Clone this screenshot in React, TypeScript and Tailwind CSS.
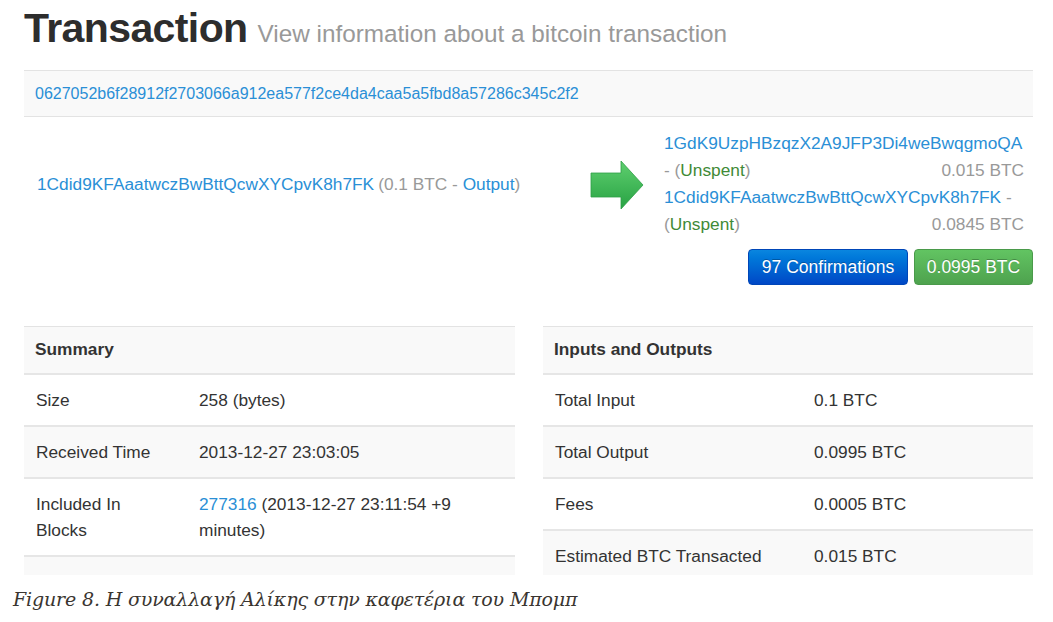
import { ReactElement } from "react";

const summary = [
  { label: "Size", value: <>258 (bytes)</> },
  { label: "Received Time", value: <>2013-12-27 23:03:05</> },
  {
    label: "Included In Blocks",
    value: (
      <>
        <div className="whitespace-nowrap">
          <span className="text-[#2a8fd6]">277316</span>
          <span> (2013-12-27 23:11:54 +9</span>
        </div>
        <div>minutes)</div>
      </>
    ),
  },
  { label: "", value: <>&nbsp;</> },
];

const totals = [
  { label: "Total Input", value: "0.1 BTC" },
  { label: "Total Output", value: "0.0995 BTC" },
  { label: "Fees", value: "0.0005 BTC" },
  { label: "Estimated BTC Transacted", value: "0.015 BTC" },
];

function Arrow(): ReactElement {
  return (
    <svg width="54" height="50" viewBox="0 0 54 50">
      <defs>
        <linearGradient id="ag" x1="0" y1="0" x2="0" y2="1">
          <stop offset="0" stopColor="#5fcf6f" />
          <stop offset="1" stopColor="#27a243" />
        </linearGradient>
      </defs>
      <path d="M1 13 H31 V1 L53 25 L31 49 V37 H1 Z" fill="url(#ag)" stroke="#2f9e46" strokeWidth="0.8" />
    </svg>
  );
}

export default function App(): ReactElement {
  return (
    <div className="w-[1053px] h-[622px] bg-white overflow-hidden font-['Liberation_Sans',Arial,sans-serif] text-[17.3px] text-[#333]">
      <div className="pl-[24px] pr-[20px]">
        <div className="flex items-baseline pt-[4px] h-[70px]">
          <h1 className="text-[41px] leading-[48px] font-bold tracking-[-0.6px] text-[#2d2d2d]">Transaction</h1>
          <span className="ml-[10px] text-[24.3px] text-[#999]">View information about a bitcoin transaction</span>
        </div>

        <div className="h-[47px] bg-[#f9f9f9] border-y border-[#e3e3e3] px-[11px] flex items-center text-[16px] text-[#2a8fd6]">
          0627052b6f28912f2703066a912ea577f2ce4da4caa5a5fbd8a57286c345c2f2
        </div>

        <div className="flex pt-[13px]">
          <div className="w-[566px] pl-[13px] flex items-center h-[110px]">
            <span className="text-[#2a8fd6]">1Cdid9KFAaatwczBwBttQcwXYCpvK8h7FK</span>
            <span className="ml-[4px] text-[#999]">
              (0.1 BTC - <span className="text-[#2a8fd6]">Output</span>)
            </span>
          </div>
          <div className="w-[54px] flex items-center h-[110px]">
            <Arrow />
          </div>
          <div className="ml-[20px] w-[360px] leading-[27px]">
            <div className="text-[#2a8fd6] whitespace-nowrap">1GdK9UzpHBzqzX2A9JFP3Di4weBwqgmoQA</div>
            <div className="flex justify-between text-[#999]">
              <span>
                - (<span className="text-[#3f8a36]">Unspent</span>)
              </span>
              <span>0.015 BTC</span>
            </div>
            <div className="whitespace-nowrap">
              <span className="text-[#2a8fd6]">1Cdid9KFAaatwczBwBttQcwXYCpvK8h7FK</span>
              <span className="text-[#999]"> -</span>
            </div>
            <div className="flex justify-between text-[#999]">
              <span>
                (<span className="text-[#3f8a36]">Unspent</span>)
              </span>
              <span>0.0845 BTC</span>
            </div>
          </div>
        </div>

        <div className="flex justify-end gap-[6px] mt-[9px]">
          <div className="w-[160px] h-[36px] rounded-[4px] flex items-center justify-center text-white text-[17.5px] bg-gradient-to-b from-[#0a86df] to-[#0047c6] border border-[#0046b8] [text-shadow:0_-1px_0_rgba(0,0,0,0.25)]">
            97 Confirmations
          </div>
          <div className="w-[119px] h-[36px] rounded-[4px] flex items-center justify-center text-white text-[17.5px] bg-gradient-to-b from-[#62c462] to-[#4ea24e] border border-[#4a9a4a] [text-shadow:0_-1px_0_rgba(0,0,0,0.25)]">
            0.0995 BTC
          </div>
        </div>

        <div className="flex gap-[28px] mt-[41px] h-[249px] overflow-hidden">
          <div className="w-[491px]">
            <div className="h-[47px] bg-[#f9f9f9] border-t border-[#e3e3e3] px-[11px] flex items-center font-bold">Summary</div>
            {summary.map((r, i) => (
              <div key={i} className={`flex border-t-2 border-[#e6e6e6] py-[12px] leading-[26px] ${i % 2 === 1 || i === 3 ? "bg-[#f9f9f9]" : "bg-white"}`}>
                <div className="w-[175px] pl-[12px] pr-[30px]">{r.label}</div>
                <div className="flex-1">{r.value}</div>
              </div>
            ))}
          </div>
          <div className="w-[490px]">
            <div className="h-[47px] bg-[#f9f9f9] border-t border-[#e3e3e3] px-[11px] flex items-center font-bold">Inputs and Outputs</div>
            {totals.map((r, i) => (
              <div key={i} className={`flex border-t-2 border-[#e6e6e6] py-[12px] leading-[26px] ${i % 2 === 1 ? "bg-[#f9f9f9]" : "bg-white"}`}>
                <div className="w-[271px] pl-[12px]">{r.label}</div>
                <div className="flex-1">{r.value}</div>
              </div>
            ))}
          </div>
        </div>
      </div>

      <div className="pl-[13px] mt-[10px] font-['DejaVu_Serif',serif] italic text-[19px] text-[#3a3530] tracking-[-0.15px]">
        Figure 8. Η συναλλαγή Αλίκης στην καφετέρια του Μπομπ
      </div>
    </div>
  );
}
